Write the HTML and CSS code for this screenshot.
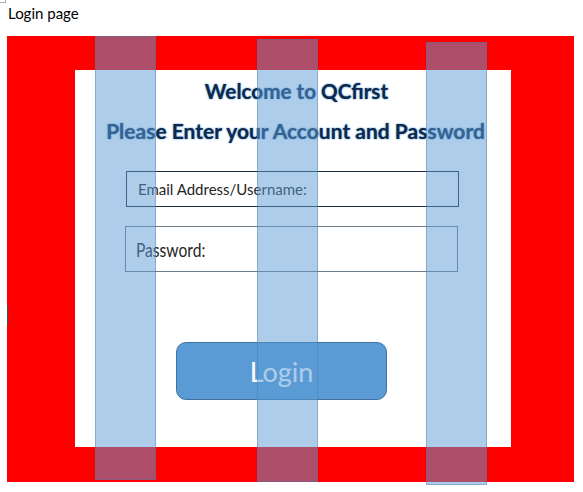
FILE: index.html
```html
<!DOCTYPE html>
<html>
<head>
<meta charset="utf-8">
<link rel="stylesheet" href="styles.css">
</head>
<body>
<div class="corner"></div>
<p class="caption">Login page</p>
<div class="frame">
  <span class="tick"></span>
  <div class="panel">
    <h1 class="title">Welcome to QCfirst</h1>
    <h2 class="subtitle">Please Enter your Account and Password</h2>
    <div class="field field-email"><span class="label">Email Address/Username:</span></div>
    <div class="field field-pass"><span class="label label-pass">Password:</span></div>
    <button class="login">Login</button>
  </div>
  <div class="stripe stripe-1"></div>
  <div class="stripe stripe-2"></div>
  <div class="stripe stripe-3"></div>
</div>
</body>
</html>
```

FILE: styles.css
```css
html, body {
  margin: 0;
  padding: 0;
  background: #ffffff;
}
body {
  position: relative;
  width: 583px;
  height: 492px;
  overflow: hidden;
  font-family: Lato, "Open Sans", sans-serif;
  color: #000;
}
.corner {
  position: absolute;
  left: 0;
  top: 0;
  width: 5px;
  height: 2px;
  border-right: 1px solid #b0b0b0;
  border-bottom: 1px solid #b0b0b0;
}
.caption {
  margin: 0;
  padding: 4px 0 0 8px;
  height: 36px;
  box-sizing: border-box;
  font-size: 15px;
  line-height: 18px;
  color: #000;
}
.frame {
  position: relative;
  margin-left: 7px;
  width: 567px;
  height: 446px;
  box-sizing: border-box;
  padding: 34px 63px 35px 68px;
  background: #ff0000;
}
.tick {
  position: absolute;
  left: 0;
  top: 269px;
  width: 1px;
  height: 20px;
  background: #1f5f5f;
}
.panel {
  width: 436px;
  height: 377px;
  background: #ffffff;
  display: flex;
  flex-direction: column;
  align-items: flex-start;
}
.title {
  margin: 9px 0 0 0;
  align-self: center;
  font-size: 20.7px;
  line-height: 24px;
  font-weight: 700;
  color: #10284a;
  text-shadow: 0 0 2px rgba(91,155,213,0.9), 0 0 1px rgba(91,155,213,0.9);
  padding-left: 7px;
}
.subtitle {
  margin: 16px 0 0 0;
  align-self: center;
  font-size: 21px;
  line-height: 24px;
  font-weight: 700;
  color: #10284a;
  text-shadow: 0 0 2px rgba(91,155,213,0.9), 0 0 1px rgba(91,155,213,0.9);
  padding-left: 5px;
}
.field {
  box-sizing: border-box;
  width: 333px;
  display: flex;
  align-items: center;
  background: #fff;
}
.field-email {
  margin: 28px 0 0 51px;
  height: 36px;
  border: 1px solid #1c2b3a;
  padding-left: 11px;
}
.field-pass {
  margin: 19px 0 0 50px;
  height: 46px;
  border: 1px solid #6e7b88;
  padding-left: 10px;
}
.label {
  font-size: 15px;
  color: #262626;
}
.label-pass {
  font-size: 19px;
  display: inline-block;
  transform: scaleX(0.82);
  transform-origin: left center;
}
.login {
  margin: 70px 0 0 101px;
  width: 211px;
  height: 58px;
  box-sizing: border-box;
  border: 1px solid #41719c;
  border-radius: 10px;
  background: #5b9bd5;
  color: #ffffff;
  font-family: Lato, "Open Sans", sans-serif;
  font-size: 27px;
  padding: 0;
}
.stripe {
  position: absolute;
  width: 61px;
  box-sizing: border-box;
  background: rgba(91,155,213,0.5);
  border: 1px solid rgba(65,113,156,0.35);
}
.stripe-1 {
  left: 88px;
  top: 0;
  height: 444px;
}
.stripe-2 {
  left: 250px;
  top: 3px;
  height: 443px;
}
.stripe-3 {
  left: 419px;
  top: 6px;
  height: 443px;
}
```
